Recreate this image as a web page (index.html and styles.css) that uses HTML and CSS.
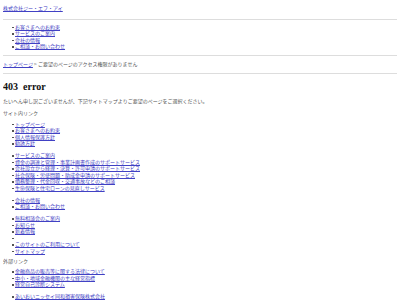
FILE: index.html
```html
<!DOCTYPE html>
<html lang="ja">
<head>
    <meta charset="UTF-8">
    <title>403 error | 株式会社ジー・エフ・アイ</title>
    <link rel="stylesheet" href="styles.css">
</head>
<body>
    <div class="header">
        <p class="site-name"><a href="#">株式会社ジー・エフ・アイ</a></p>
        <hr>
        <ul class="global-nav">
            <li><a href="#">お客さまへのお約束</a></li>
            <li><a href="#">サービスのご案内</a></li>
            <li><a href="#">会社の情報</a></li>
            <li><a href="#">ご相談・お問い合わせ</a></li>
        </ul>
        <hr>
    </div>

    <p class="breadcrumb"><a href="#">トップページ</a> &gt; ご要望のページのアクセス権限がありません</p>
    <hr>

    <div class="content">
        <h1>403&nbsp; error</h1>
        <p class="lead">たいへん申し訳ございませんが、下記サイトマップよりご要望のページをご選択ください。</p>

        <h2>サイト内リンク</h2>
        <ul class="group">
            <li><a href="#">トップページ</a></li>
            <li><a href="#">お客さまへのお約束</a></li>
            <li><a href="#">個人情報保護方針</a></li>
            <li><a href="#">勧誘方針</a></li>
        </ul>
        <ul class="group">
            <li><a href="#">サービスのご案内</a></li>
            <li><a href="#">資金の調達と管理・事業計画書作成のサポートサービス</a></li>
            <li><a href="#">会社設立から経理・決算・許可申請のサポートサービス</a></li>
            <li><a href="#">社会保険・労使問題・助成金申請のサポートサービス</a></li>
            <li><a href="#">債務整理・代金回収・交通事故などのご相談</a></li>
            <li><a href="#">生命保険と住宅ローンの見直しサービス</a></li>
        </ul>
        <ul class="group">
            <li><a href="#">会社の情報</a></li>
            <li><a href="#">ご相談・お問い合わせ</a></li>
        </ul>
        <ul class="group">
            <li><a href="#">無料相談会のご案内</a></li>
            <li><a href="#">お知らせ</a></li>
            <li><a href="#">新着情報</a></li>
            <li></li>
            <li><a href="#">このサイトのご利用について</a></li>
            <li><a href="#">サイトマップ</a></li>
        </ul>

        <h2>外部リンク</h2>
        <ul class="group">
            <li><a href="#">金融商品の販売等に関する法律について</a></li>
            <li><a href="#">中小・地域金融機関の主な経営指標</a></li>
            <li><a href="#">経営自己診断システム</a></li>
        </ul>
        <ul class="group">
            <li><a href="#">あいおいニッセイ同和損害保険株式会社</a></li>
        </ul>
    </div>
</body>
</html>
```

FILE: styles.css
```css
body {
    font-family: "Noto Sans CJK JP", "Noto Sans", sans-serif;
    font-size: 5px;
    line-height: 6.5px;
    color: #555;
    background-color: #fff;
    margin: 0 3px;
    padding: 0;
}
a {
    color: #4141c4;
    text-decoration: underline;
    text-underline-offset: 0.5px;
}
p {
    margin: 0;
}
hr {
    border: none;
    border-top: 1px solid #ddd;
    margin: 0;
}
.site-name {
    padding-top: 5px;
    margin-bottom: 7px;
}
ul {
    margin: 0;
    padding-left: 12px;
    list-style: none;
}
li {
    position: relative;
    min-height: 6.5px;
}
li::before {
    content: "";
    position: absolute;
    left: -3px;
    top: 3px;
    width: 1.5px;
    height: 1.5px;
    background-color: #555;
}
.global-nav {
    margin: 4px 0 5.5px;
}
.breadcrumb {
    margin: 4.5px 0 5.5px;
}
.content h1 {
    font-family: "Liberation Serif", serif;
    font-size: 10px;
    line-height: 12px;
    font-weight: bold;
    color: #111;
    margin: 7px 0 5.5px;
}
.lead {
    margin-bottom: 5.5px;
}
.content h2 {
    font-size: 5px;
    font-weight: normal;
    margin: 3.5px 0 4px;
}
.group + .group {
    margin-top: 5.5px;
}
```
